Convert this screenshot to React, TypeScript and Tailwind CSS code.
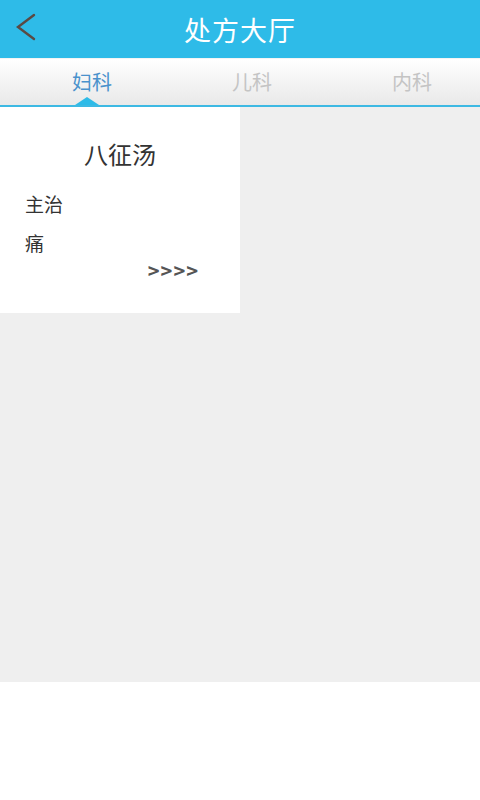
const font = { fontFamily: '"Noto Sans CJK SC", "Noto Sans", sans-serif' }

const tabs = ['妇科', '儿科', '内科']

export default function App() {
  return (
    <div className="w-[480px] h-[800px] flex flex-col bg-white" style={font}>
      {/* header */}
      <div className="relative h-[58px] bg-[#2ebbe8] flex items-center justify-center">
        <button className="absolute left-[12px] top-[12px] w-[26px] h-[30px] flex items-center justify-center">
          <svg width="22" height="28" viewBox="0 0 22 28" fill="none">
            <path d="M20 2 L4 14 L20 26" stroke="#5a4a44" strokeWidth="2.4" strokeLinecap="round" strokeLinejoin="miter" />
          </svg>
        </button>
        <h1 className="text-[27px] leading-none text-white tracking-[1px]">处方大厅</h1>
      </div>

      {/* tabs */}
      <div className="h-[49px] bg-gradient-to-b from-[#ffffff] to-[#e9e9e9] border-t border-[#f4f4f4] border-b-2 border-b-[#3db9e3] flex">
        {tabs.map((tab, i) => (
          <div key={tab} className="relative flex-1 flex items-center justify-center pl-[24px]">
            <span className={i === 0 ? 'text-[20px] text-[#4a92cc]' : 'text-[20px] text-[#c4c4c4]'}>
              {tab}
            </span>
            {i === 0 && (
              <span className="absolute bottom-0 left-[75px] w-0 h-0 border-l-[12px] border-r-[12px] border-b-[8px] border-l-transparent border-r-transparent border-b-[#2ebbe8]" />
            )}
          </div>
        ))}
      </div>

      {/* content */}
      <div className="h-[575px] bg-[#efefef]">
        <div className="w-[240px] h-[206px] bg-white px-[25px] pt-[31px]">
          <div className="text-center text-[24px] leading-[32px] text-[#333333]">八征汤</div>
          <div className="mt-[22px] text-[19px] leading-[24px] text-[#333333]">主治</div>
          <div className="mt-[15px] text-[19px] leading-[24px] text-[#333333]">痛</div>
          <div className="mt-[4px] flex justify-end pr-[16px] text-[20px] leading-[24px] font-bold text-[#555555] tracking-[1px]">
            &gt;&gt;&gt;&gt;
          </div>
        </div>
      </div>

      <div className="flex-1 bg-white" />
    </div>
  )
}
